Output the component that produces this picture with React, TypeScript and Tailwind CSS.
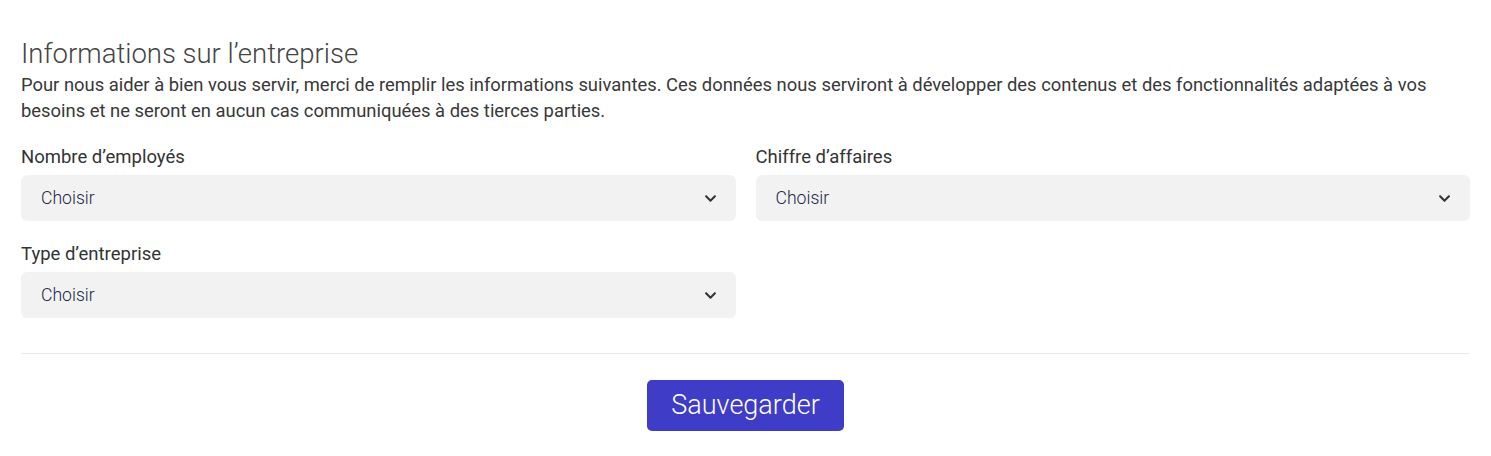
import { FaChevronDown } from 'react-icons/fa';

function Select({ label }: { label: string }) {
  return (
    <div className="flex flex-col">
      <label className="text-[18.5px] leading-[24px] text-[#333] mb-[6px]">{label}</label>
      <div className="h-[46px] rounded-[6px] bg-[#f2f2f2] flex items-center justify-between pl-[20px] pr-[19px]">
        <span className="text-[17.6px] font-light text-[#1c2747]">Choisir</span>
        <FaChevronDown className="text-[#333] w-[13px] h-[13px]" />
      </div>
    </div>
  );
}

export default function App() {
  return (
    <div className="min-h-screen bg-white px-[21px] pt-[36px] pb-[24px]" style={{ fontFamily: 'Roboto, "Noto Sans", sans-serif' }}>
      <h2 className="text-[27.5px] leading-[36px] font-light text-[#444]">Informations sur l’entreprise</h2>
      <p className="text-[18.4px] leading-[26px] text-[#383838]">
        Pour nous aider à bien vous servir, merci de remplir les informations suivantes. Ces données nous serviront à développer des contenus et des fonctionnalités adaptées à vos besoins et ne seront en aucun cas communiquées à des tierces parties.
      </p>
      <div className="grid grid-cols-2 gap-x-[20px] gap-y-[21px] mt-[21px]">
        <Select label="Nombre d’employés" />
        <Select label="Chiffre d’affaires" />
        <Select label="Type d’entreprise" />
      </div>
      <div className="border-t border-[#ebebeb] mt-[35px] flex justify-center pt-[26px]">
        <button className="w-[197px] h-[51px] rounded-[5px] bg-[#3f3cc8] text-white text-[27px] font-light">Sauvegarder</button>
      </div>
    </div>
  );
}
